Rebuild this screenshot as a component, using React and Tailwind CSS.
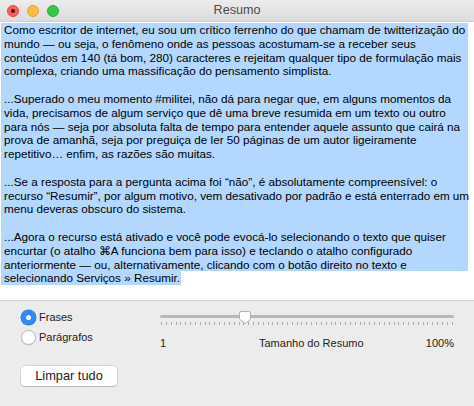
import React from 'react';

const paragraphs = [
  [
    'Como escritor de internet, eu sou um crítico ferrenho do que chamam de twitterização do',
    'mundo — ou seja, o fenômeno onde as pessoas acostumam-se a receber seus',
    'conteúdos em 140 (tá bom, 280) caracteres e rejeitam qualquer tipo de formulação mais',
    'complexa, criando uma massificação do pensamento simplista.',
  ],
  [
    '...Superado o meu momento #militei, não dá para negar que, em alguns momentos da',
    'vida, precisamos de algum serviço que dê uma breve resumida em um texto ou outro',
    'para nós — seja por absoluta falta de tempo para entender aquele assunto que cairá na',
    'prova de amanhã, seja por preguiça de ler 50 páginas de um autor ligeiramente',
    'repetitivo… enfim, as razões são muitas.',
  ],
  [
    '...Se a resposta para a pergunta acima foi “não”, é absolutamente compreensível: o',
    'recurso “Resumir”, por algum motivo, vem desativado por padrão e está enterrado em um',
    'menu deveras obscuro do sistema.',
  ],
  [
    '...Agora o recurso está ativado e você pode evocá-lo selecionando o texto que quiser',
    'encurtar (o atalho ⌘A funciona bem para isso) e teclando o atalho configurado',
    'anteriormente — ou, alternativamente, clicando com o botão direito no texto e',
  ],
];

function TitleBar() {
  return (
    <div className="relative h-[22px] flex items-center justify-center bg-gradient-to-b from-[#ececec] to-[#dcdcdc] border-b border-[#cfcfcf]">
      <div className="absolute left-[7px] top-[5px] flex gap-[8px]">
        <div className="w-[12px] h-[12px] rounded-full bg-[#fc605c] border border-[#e0443e] flex items-center justify-center">
          <div className="w-[4px] h-[4px] rounded-full bg-[#4d0000]" />
        </div>
        <div className="w-[12px] h-[12px] rounded-full bg-[#fdbc40] border border-[#dea236]" />
        <div className="w-[12px] h-[12px] rounded-full bg-[#34c84a] border border-[#27aa35]" />
      </div>
      <span className="text-[12.6px] text-[#4a4a4a]">Resumo</span>
    </div>
  );
}

function Radio({ checked, label }) {
  return (
    <div className="h-[20px] flex items-center gap-[3px]">
      {checked ? (
        <div className="w-[15px] h-[15px] rounded-full bg-[#2f8af5] flex items-center justify-center shadow-[0_0_0_0.5px_#2a7de0]">
          <div className="w-[5px] h-[5px] rounded-full bg-white" />
        </div>
      ) : (
        <div className="w-[15px] h-[15px] rounded-full bg-white border border-[#b9b9b9] shadow-[0_0.5px_1px_rgba(0,0,0,0.12)]" />
      )}
      <span className="text-[11px] text-[#222]">{label}</span>
    </div>
  );
}

function Slider() {
  const ticks = Array.from({ length: 61 });
  return (
    <div className="w-[294px] flex flex-col">
      <div className="relative h-[18px]">
        <div className="absolute left-0 right-0 top-[8px] h-[3px] rounded-full bg-[#b8b8b8]" />
        <div className="absolute left-0 right-0 top-[15px] flex justify-between px-[1px]">
          {ticks.map((_, i) => (
            <div key={i} className="w-px h-[3px] bg-[#a6a6a6]" />
          ))}
        </div>
        <svg className="absolute left-[79px] top-[4px]" width="12" height="14" viewBox="0 0 12 14">
          <path
            d="M2 0.5 H10 A1.5 1.5 0 0 1 11.5 2 V8 L6 12.8 L0.5 8 V2 A1.5 1.5 0 0 1 2 0.5 Z"
            fill="#ffffff"
            stroke="#b0b0b0"
            strokeWidth="1"
          />
        </svg>
      </div>
      <div className="mt-[11px] flex items-center text-[11px] text-[#222] leading-[14px]">
        <span className="w-[99px]">1</span>
        <span className="flex-1">Tamanho do Resumo</span>
        <span>100%</span>
      </div>
    </div>
  );
}

export default function App() {
  return (
    <div className="w-[474px] h-[406px] flex flex-col bg-white overflow-hidden font-['Liberation_Sans',Arial,sans-serif]">
      <TitleBar />

      <div className="h-[278px] pt-[1px] pl-[1px] text-[11.7px] leading-[13.8px] text-black">
        <div className="w-[467px] bg-[#b3d7ff] pl-[3px]">
          {paragraphs.map((lines, p) => (
            <div key={p}>
              {p > 0 && <div className="h-[13.8px]" />}
              {lines.map((l) => (
                <div key={l} className="h-[13.8px] whitespace-nowrap">{l}</div>
              ))}
            </div>
          ))}
        </div>
        <div className="w-fit bg-[#b3d7ff] pl-[3px] pr-[1px] h-[13.8px] whitespace-nowrap">
          selecionando Serviços » Resumir.
        </div>
      </div>

      <div className="flex-1 bg-[#ececec] border-t border-[#d4d4d4] flex pl-[21px]">
        <div className="w-[96px] flex flex-col pt-[6px]">
          <Radio checked label="Frases" />
          <Radio label="Parágrafos" />
          <button className="mt-[19px] w-[96px] h-[20px] rounded-[4px] bg-white text-[12.8px] text-[#222] shadow-[0_0_0_0.5px_rgba(0,0,0,0.18),0_1px_1px_rgba(0,0,0,0.15)]">
            Limpar tudo
          </button>
        </div>
        <div className="ml-[43px] pt-[6px]">
          <Slider />
        </div>
      </div>
    </div>
  );
}
